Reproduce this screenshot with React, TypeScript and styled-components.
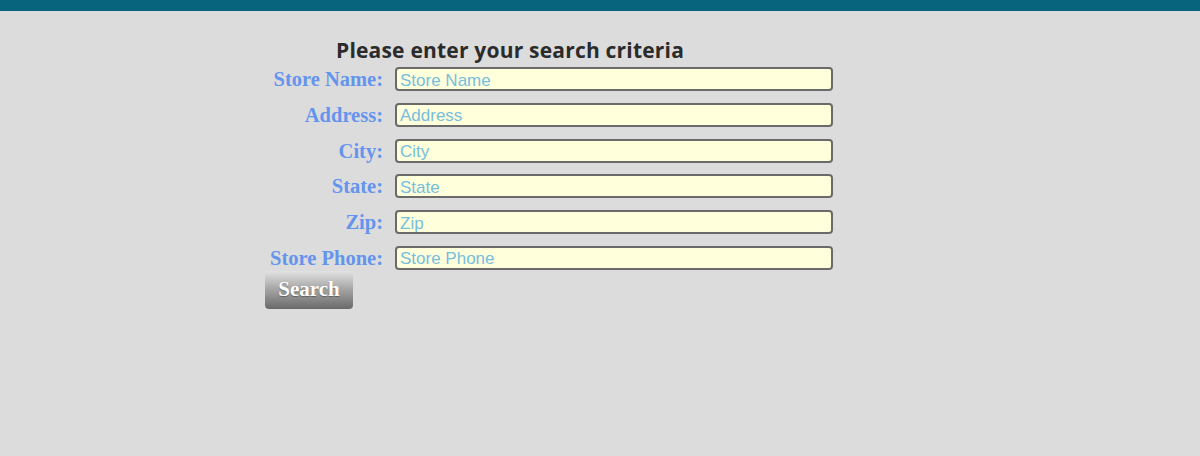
import React from "react";
import styled, { createGlobalStyle } from "styled-components";

const Global = createGlobalStyle`
  html, body { margin: 0; padding: 0; background: #dcdcdc; }
  body { font-family: "Liberation Serif", serif; }
`;

const TopBar = styled.div`
  height: 11px;
  background: #08637d;
`;

const Page = styled.div`
  height: 445px;
  padding: 25px 0 0 265px;
  box-sizing: border-box;
`;

const Heading = styled.h2`
  margin: 0 0 0 71px;
  font-family: "Open Sans", sans-serif;
  font-weight: 700;
  font-size: 21px;
  line-height: 28px;
  color: #2b2b2b;
  letter-spacing: 0.2px;
`;

const Form = styled.form`
  display: grid;
  grid-template-columns: 118px 438px;
  grid-auto-rows: 24px;
  column-gap: 12px;
  row-gap: 11.8px;
  margin-top: 3px;
`;

const Label = styled.label`
  font-family: "Liberation Serif", serif;
  font-weight: 700;
  font-size: 20.5px;
  line-height: 24px;
  color: #6495ed;
  text-align: right;
  white-space: nowrap;
`;

const Field = styled.input`
  box-sizing: border-box;
  width: 438px;
  height: 24px;
  margin: 0;
  padding: 3px 3px 0;
  background: #ffffdc;
  border: 2px solid #6a6a6a;
  border-radius: 4px;
  font-family: "Liberation Sans", sans-serif;
  font-size: 17px;
  color: #333;
  outline: none;
  &::placeholder { color: #76bedc; opacity: 1; }
`;

const SearchButton = styled.button`
  margin-top: 1px;
  width: 88px;
  height: 38px;
  border: none;
  border-radius: 4px;
  background: linear-gradient(to bottom, #e2e2e2 0%, #a8a8a8 45%, #6a6a6a 100%);
  color: #fff;
  font-family: "Liberation Serif", serif;
  font-weight: 700;
  font-size: 21px;
  text-shadow: 0 1px 1px rgba(0,0,0,0.35);
  padding: 0;
  cursor: pointer;
`;

const fields = ["Store Name", "Address", "City", "State", "Zip", "Store Phone"];

export default function App() {
  return (
    <>
      <Global />
      <TopBar />
      <Page>
        <Heading>Please enter your search criteria</Heading>
        <Form onSubmit={(e) => e.preventDefault()}>
          {fields.map((f) => (
            <React.Fragment key={f}>
              <Label>{f}:</Label>
              <Field placeholder={f} />
            </React.Fragment>
          ))}
        </Form>
        <SearchButton type="button">Search</SearchButton>
      </Page>
    </>
  );
}
